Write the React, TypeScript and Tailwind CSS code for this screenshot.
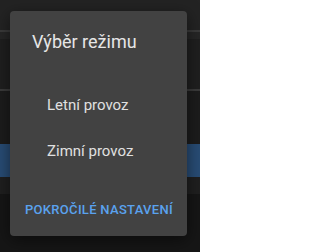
export default function App() {
  return (
    <div className="relative h-[252px] w-[200px] overflow-hidden bg-[#161616] font-['Roboto',sans-serif]">
      {/* page behind the dialog */}
      <div className="flex flex-col">
        <div className="h-[30px] bg-[#232323]" />
        <div className="h-[2px] bg-[#3a3a3a]" />
        <div className="h-[7px] bg-[#262626]" />
        <div className="h-[50px] bg-[#1f1f1f]" />
        <div className="h-[2px] bg-[#3a3a3a]" />
        <div className="h-[53px] bg-[#1c1c1c]" />
        <div className="h-[33px] bg-[#284c74]" />
        <div className="h-[17px] bg-[#1f1f1f]" />
      </div>

      {/* dialog */}
      <div className="absolute left-[10px] top-[11px] flex h-[225px] w-[177px] flex-col rounded-[4px] bg-[#424242] shadow-[0_4px_16px_rgba(0,0,0,0.5)]">
        <h2 className="px-[22px] pt-[19px] text-[18px] leading-[24px] text-[#e6e6e6]">Výběr režimu</h2>
        <ul className="mt-[41px] flex flex-col gap-[26px] px-[37px] text-[15px] leading-[20px] text-[#e0e0e0]">
          <li>Letní provoz</li>
          <li>Zimní provoz</li>
        </ul>
        <div className="mt-auto px-[15px] pb-[15px]">
          <button className="whitespace-nowrap text-[13px] font-medium uppercase leading-[20px] tracking-[0.3px] text-[#5aa2ef]">
            Pokročilé nastavení
          </button>
        </div>
      </div>
    </div>
  );
}
